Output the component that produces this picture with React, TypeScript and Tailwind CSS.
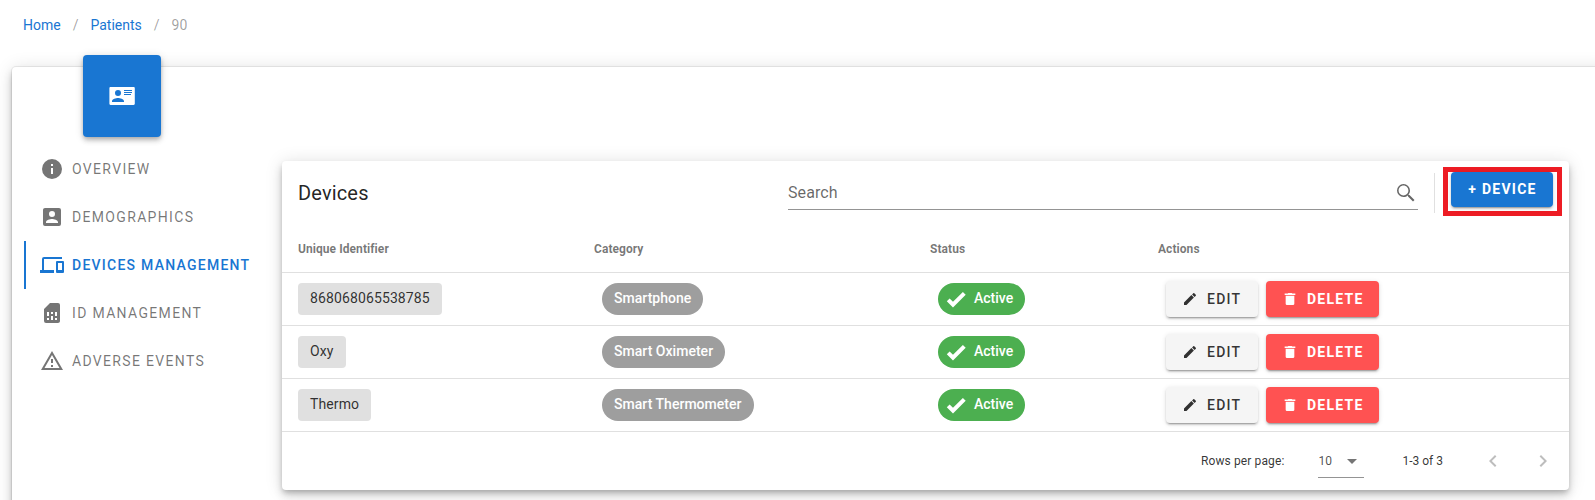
import React from "react";

const icons = {
  card: "M0.5,3H23.6C24.3,3 24.8,3.5 24.8,4.2V19.8C24.8,20.5 24.3,21 23.6,21H0.5C-0.1,21 -0.6,20.5 -0.6,19.8V4.2C-0.6,3.5 -0.1,3 0.5,3M14,6V7H22V6H14M14,8V9H22V8H14M14,10V11H21V10H14M8,13.91C6,13.91 2,15 2,17V18H14V17C14,15 10,13.91 8,13.91M8,6A3,3 0 0,0 5,9A3,3 0 0,0 8,12A3,3 0 0,0 11,9A3,3 0 0,0 8,6Z",
  info: "M13,9H11V7H13M13,17H11V11H13M12,2A10,10 0 0,0 2,12A10,10 0 0,0 12,22A10,10 0 0,0 22,12A10,10 0 0,0 12,2Z",
  account: "M6,17C6,15 10,13.9 12,13.9C14,13.9 18,15 18,17V18H6M15,9A3,3 0 0,1 12,12A3,3 0 0,1 9,9A3,3 0 0,1 12,6A3,3 0 0,1 15,9M3,5V19A2,2 0 0,0 5,21H19A2,2 0 0,0 21,19V5A2,2 0 0,0 19,3H5C3.89,3 3,3.9 3,5Z",
  devices: "M4,6H22V4H4A2,2 0 0,0 2,6V17H0V20H14V17H4V6M23,8H17A1,1 0 0,0 16,9V19A1,1 0 0,0 17,20H23A1,1 0 0,0 24,19V9A1,1 0 0,0 23,8M22,17H18V10H22V17Z",
  sim: "M20,4A2,2 0 0,0 18,2H10L4,8V20A2,2 0 0,0 6,22H18C19.11,22 20,21.1 20,20V4M9,19H7V17H9V19M17,19H15V17H17V19M9,15H7V11H9V15M13,19H11V15H13V19M13,13H11V11H13V13M17,15H15V11H17V15Z",
  alert: "M12,2L1,21H23M12,6L19.53,19H4.47M11,10V14H13V10M11,16V18H13V16",
  search: "M9.5,3A6.5,6.5 0 0,1 16,9.5C16,11.11 15.41,12.59 14.44,13.73L14.71,14H15.5L20.5,19L19,20.5L14,15.5V14.71L13.73,14.44C12.59,15.41 11.11,16 9.5,16A6.5,6.5 0 0,1 3,9.5A6.5,6.5 0 0,1 9.5,3M9.5,4.6C6.8,4.6 4.6,6.8 4.6,9.5C4.6,12.2 6.8,14.4 9.5,14.4C12.2,14.4 14.4,12.2 14.4,9.5C14.4,6.8 12.2,4.6 9.5,4.6Z",
  check: "M9,20.42L2.79,14.21L5.62,11.38L9,14.77L18.88,4.88L21.71,7.71L9,20.42Z",
  pencil: "M20.71,7.04C21.1,6.65 21.1,6 20.71,5.63L18.37,3.29C18,2.9 17.35,2.9 16.96,3.29L15.12,5.12L18.87,8.87M3,17.25V21H6.75L17.81,9.93L14.06,6.18L3,17.25Z",
  trash: "M20,3.8H15.5L14.5,3H9.5L8.5,3.8H4V6H20M5.5,19A2,2 0 0,0 7.5,21H16.5A2,2 0 0,0 18.5,19V7H5.5V19Z",
  down: "M7,10L12,15L17,10H7Z",
  left: "M15.41,16.58L10.83,12L15.41,7.41L14,6L8,12L14,18L15.41,16.58Z",
  right: "M8.59,16.58L13.17,12L8.59,7.41L10,6L16,12L10,18L8.59,16.58Z",
};

function Icon({ name, className = "size-6" }: { name: keyof typeof icons; className?: string }) {
  return (
    <svg viewBox="0 0 24 24" className={`shrink-0 overflow-visible fill-current ${className}`}>
      <path d={icons[name]} />
    </svg>
  );
}

const tabs: { icon: keyof typeof icons; label: string; active?: boolean }[] = [
  { icon: "info", label: "OVERVIEW" },
  { icon: "account", label: "DEMOGRAPHICS" },
  { icon: "devices", label: "DEVICES MANAGEMENT", active: true },
  { icon: "sim", label: "ID MANAGEMENT" },
  { icon: "alert", label: "ADVERSE EVENTS" },
];

const devices = [
  { id: "868068065538785", category: "Smartphone" },
  { id: "Oxy", category: "Smart Oximeter" },
  { id: "Thermo", category: "Smart Thermometer" },
];

const columns = "grid shrink-0 grid-cols-[296px_336px_228px_1fr] items-center pl-4";
const buttonShadow =
  "shadow-[0_3px_1px_-2px_rgba(0,0,0,0.2),0_2px_2px_0_rgba(0,0,0,0.14),0_1px_5px_0_rgba(0,0,0,0.12)]";

function DeviceRow({ id, category }: { id: string; category: string }) {
  return (
    <div className={`${columns} h-[53px] border-b border-[#e0e0e0] text-sm`}>
      <div className="flex">
        <span className="flex h-8 items-center rounded bg-[#e0e0e0] px-3 pb-0.5 tracking-[0.12px] text-black/80">
          {id}
        </span>
      </div>
      <div className="flex pl-2">
        <span className="flex h-8 items-center rounded-full bg-[#9e9e9e] px-3 pb-0.5 font-medium tracking-[0.03px] text-white">
          {category}
        </span>
      </div>
      <div className="flex pl-2">
        <span className="flex h-8 items-center gap-1.5 rounded-full bg-[#4caf50] pr-3 pl-1.5 font-medium text-white">
          <Icon name="check" />
          <span className="pb-0.5">Active</span>
        </span>
      </div>
      <div className="flex gap-2 pl-2">
        <button
          className={`flex h-9 w-[92px] items-center gap-[9px] rounded bg-[#f5f5f5] pl-4 font-medium tracking-[1.25px] text-black/80 ${buttonShadow}`}
        >
          <Icon name="pencil" className="size-4" />
          EDIT
        </button>
        <button
          className={`flex h-9 w-[113px] items-center gap-[9px] rounded bg-[#ff5252] pl-4 font-bold tracking-[1.25px] text-white ${buttonShadow}`}
        >
          <Icon name="trash" className="size-4" />
          DELETE
        </button>
      </div>
    </div>
  );
}

export default function App() {
  return (
    <div className="flex h-[500px] w-[1595px] flex-col overflow-hidden bg-white font-[Roboto,sans-serif] text-black/87">
      <nav className="flex h-[67px] shrink-0 items-start gap-3 pt-[15px] pl-[23px] text-sm text-black/38">
        <a className="text-[#1976d2]">Home</a>
        <span>/</span>
        <a className="text-[#1976d2]">Patients</a>
        <span>/</span>
        <span>90</span>
      </nav>
      <main className="ml-3 flex h-[600px] w-[1600px] shrink-0 rounded bg-white shadow-[0_0_0_1px_rgba(0,0,0,0.06),0_3px_5px_-1px_rgba(0,0,0,0.2),0_6px_10px_0_rgba(0,0,0,0.14),0_1px_18px_0_rgba(0,0,0,0.12)]">
        <aside className="-mt-3 w-[270px] shrink-0 pl-3">
          <div className="ml-[59px] flex h-[82px] w-[78px] items-center justify-center rounded bg-[#1976d2] text-white shadow-[0_2px_4px_-1px_rgba(0,0,0,0.2),0_4px_5px_0_rgba(0,0,0,0.14),0_1px_10px_0_rgba(0,0,0,0.12)]">
            <Icon name="card" />
          </div>
          <div className="mt-2 flex flex-col">
            {tabs.map((tab) => (
              <div
                key={tab.label}
                className={`flex h-12 items-center gap-2 border-l-2 pl-3.5 text-sm whitespace-nowrap ${
                  tab.active
                    ? "border-[#1976d2] font-medium tracking-[1.25px] text-[#1976d2]"
                    : "border-transparent tracking-[1.33px] text-black/54"
                }`}
              >
                <Icon name={tab.icon} />
                {tab.label}
              </div>
            ))}
          </div>
        </aside>
        <section className="mt-[94px] flex h-[329px] w-[1287px] shrink-0 flex-col rounded bg-white shadow-[0_3px_5px_-1px_rgba(0,0,0,0.2),0_6px_10px_0_rgba(0,0,0,0.14),0_1px_18px_0_rgba(0,0,0,0.12)]">
          <header className="flex h-16 shrink-0 items-center pr-[7px] pl-4">
            <h1 className="w-[490px] shrink-0 text-xl tracking-[0.15px]">Devices</h1>
            <div className="mt-0.5 flex h-8 w-[630px] shrink-0 items-center justify-between border-b border-[#949494] pb-px text-base tracking-[0.1px] text-black/60">
              <span>Search</span>
              <Icon name="search" />
            </div>
            <div className="ml-4 h-10 w-px shrink-0 bg-black/12" />
            <div className="-mt-[3px] ml-2 flex h-[49px] w-[119px] shrink-0 border-[5px] border-[#ed1c24] pl-[3px]">
              <button
                className={`h-[35px] w-[102px] rounded bg-[#1976d2] pb-0.5 pl-px text-sm font-bold tracking-[1.25px] text-white ${buttonShadow}`}
              >
                + DEVICE
              </button>
            </div>
          </header>
          <div
            className={`${columns} h-12 border-b border-[#e0e0e0] pt-px text-xs font-bold tracking-[0.06px] text-black/54`}
          >
            <span>Unique Identifier</span>
            <span>Category</span>
            <span>Status</span>
            <span>Actions</span>
          </div>
          {devices.map((device) => (
            <DeviceRow key={device.id} {...device} />
          ))}
          <footer className="flex h-[58px] items-center justify-end pr-3.5 text-xs">
            <span className="tracking-[0.12px] text-black/80">Rows per page:</span>
            <div className="mt-px ml-[34px] flex h-[33px] w-[46px] items-center justify-between border-b border-[#949494] text-black/70">
              <span>10</span>
              <Icon name="down" className="size-6 text-black/54" />
            </div>
            <span className="ml-[38px] text-black/80">1-3 of 3</span>
            <Icon name="left" className="ml-[38px] size-6 text-black/26" />
            <Icon name="right" className="ml-[26px] size-6 text-black/26" />
          </footer>
        </section>
      </main>
    </div>
  );
}
